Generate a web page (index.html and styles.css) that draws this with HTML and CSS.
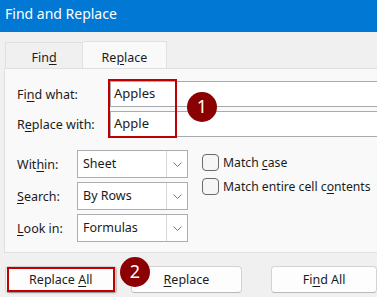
FILE: index.html
```html
<!DOCTYPE html>
<html lang="en">
<head>
    <meta charset="UTF-8">
    <meta name="viewport" content="width=device-width, initial-scale=1.0">
    <title>Find and Replace</title>
    <link rel="stylesheet" href="styles.css">
</head>
<body>
    <div class="title-bar">Find and Replace</div>
    <div class="dialog">
        <div class="tabs">
            <div class="tab">Fin<u>d</u></div>
            <div class="tab active">Re<u>p</u>lace</div>
        </div>
        <div class="panel">
            <div class="fields">
                <span class="label">Fi<u>n</u>d what:</span>
                <div class="text-input">Apples</div>
                <span class="label">R<u>e</u>place with:</span>
                <div class="text-input">Apple</div>
            </div>
            <div class="options">
                <div class="selects">
                    <span class="label">Wit<u>h</u>in:</span>
                    <div class="select"><span>Sheet</span><span class="arrow"><svg width="9" height="5" viewBox="0 0 9 5"><path d="M0.5 0.5 L4.5 4.5 L8.5 0.5" fill="none" stroke="#7a7a7a" stroke-width="1"/></svg></span></div>
                    <span class="label"><u>S</u>earch:</span>
                    <div class="select"><span>By Rows</span><span class="arrow"><svg width="9" height="5" viewBox="0 0 9 5"><path d="M0.5 0.5 L4.5 4.5 L8.5 0.5" fill="none" stroke="#7a7a7a" stroke-width="1"/></svg></span></div>
                    <span class="label"><u>L</u>ook in:</span>
                    <div class="select"><span>Formulas</span><span class="arrow"><svg width="9" height="5" viewBox="0 0 9 5"><path d="M0.5 0.5 L4.5 4.5 L8.5 0.5" fill="none" stroke="#7a7a7a" stroke-width="1"/></svg></span></div>
                </div>
                <div class="checks">
                    <div class="check"><span class="box"></span><span>Match <u>c</u>ase</span></div>
                    <div class="check"><span class="box"></span><span>Match entire cell c<u>o</u>ntents</span></div>
                </div>
            </div>
            <div class="highlight highlight-fields"></div>
            <div class="badge badge-one">1</div>
        </div>
        <div class="buttons">
            <button class="btn btn-all">Replace <u>A</u>ll</button>
            <button class="btn btn-replace"><u>R</u>eplace</button>
            <button class="btn btn-find">Fi<u>n</u>d All</button>
            <div class="highlight highlight-button"></div>
            <div class="badge badge-two">2</div>
        </div>
    </div>
</body>
</html>
```
FILE: styles.css
```css
:root {
    --title-bg: #0078d4;
    --dialog-bg: #f0f0f0;
    --panel-bg: #f9f9f9;
    --line: #e0e0e0;
    --field-line: #a9a9b0;
    --text: #1b1b1b;
    --mark: #c00000;
    --badge: #8b0000;
}

* {
    box-sizing: border-box;
}

body {
    margin: 0;
    width: 377px;
    height: 297px;
    overflow: hidden;
    background: var(--dialog-bg);
    color: var(--text);
    font-family: "Noto Sans", "Open Sans", sans-serif;
    font-size: 12px;
}

u {
    text-decoration-thickness: 1px;
    text-underline-offset: 2px;
}

.title-bar {
    height: 32px;
    background: var(--title-bg);
    color: #fff;
    font-size: 14px;
    line-height: 28px;
    padding-left: 5px;
}

.dialog {
    padding-top: 9px;
}

/* tabs */
.tabs {
    display: flex;
    align-items: flex-end;
    padding-left: 5px;
    height: 27px;
}

.tab {
    height: 26px;
    width: 78px;
    display: flex;
    align-items: center;
    justify-content: center;
    padding-top: 3px;
    font-size: 12.5px;
    border: 1px solid var(--line);
    border-bottom: none;
    background: var(--dialog-bg);
}

.tab.active {
    height: 28px;
    width: 84px;
    background: var(--panel-bg);
    border-left: none;
    position: relative;
    top: 1px;
}

.panel {
    position: relative;
    margin-left: 4px;
    width: 373px;
    height: 185px;
    background: var(--panel-bg);
    border: 1px solid var(--line);
    border-right: none;
    padding: 12px 0 0 12px;
}

.label {
    display: flex;
    align-items: center;
    font-size: 12.5px;
}

.fields {
    display: grid;
    grid-template-columns: 93px 1fr;
    row-gap: 4px;
}

.text-input {
    height: 26px;
    background: #fff;
    border: 1px solid var(--field-line);
    border-right: none;
    padding-left: 3px;
    font-size: 13px;
    line-height: 23px;
}

.options {
    display: flex;
    margin-top: 13px;
}

.selects {
    display: grid;
    grid-template-columns: 60px 111px;
    grid-auto-rows: 28px;
    row-gap: 4px;
}

.select {
    display: flex;
    background: #fff;
    border: 1px solid #adadad;
    font-size: 12.5px;
}

.select span:first-child {
    flex: 1;
    padding-left: 5px;
    line-height: 25px;
}

.arrow {
    width: 21px;
    border-left: 1px solid #d6d6d6;
    display: flex;
    align-items: center;
    justify-content: center;
}

.checks {
    display: flex;
    flex-direction: column;
    margin-left: 14px;
    white-space: nowrap;
}

.check {
    display: flex;
    align-items: center;
    height: 24px;
    font-size: 12.2px;
}

.box {
    flex: none;
    width: 17px;
    height: 17px;
    border: 1px solid #6b6b6b;
    border-radius: 4px;
    background: #f6f6f6;
    margin-right: 4px;
}

/* bottom buttons */
.buttons {
    position: relative;
    display: flex;
    margin-top: 13px;
    padding-left: 5px;
}

.btn {
    height: 27px;
    background: #fdfdfd;
    border: 1px solid #d3d3d3;
    border-bottom-color: #b8b8b8;
    border-radius: 4px;
    font-family: inherit;
    font-size: 12.5px;
    color: var(--text);
    padding: 0;
}

.btn-all {
    width: 112px;
}

.btn-replace {
    width: 112px;
    margin-left: 14px;
}

.btn-find {
    width: 106px;
    margin-left: 29px;
}

/* annotations */
.highlight {
    position: absolute;
    border: 2px solid var(--mark);
    pointer-events: none;
}

.highlight-fields {
    left: 103px;
    top: 10px;
    width: 69px;
    height: 59px;
}

.highlight-button {
    left: 7px;
    top: 1px;
    width: 108px;
    height: 25px;
    box-shadow: 1px 1px 2px rgba(0, 0, 0, 0.25);
}

.badge {
    position: absolute;
    width: 30px;
    height: 30px;
    border-radius: 50%;
    background: var(--badge);
    color: #fff;
    font-size: 18px;
    line-height: 29px;
    text-align: center;
}

.badge-one {
    left: 182px;
    top: 23px;
}

.badge-two {
    left: 120px;
    top: -9px;
}
```
